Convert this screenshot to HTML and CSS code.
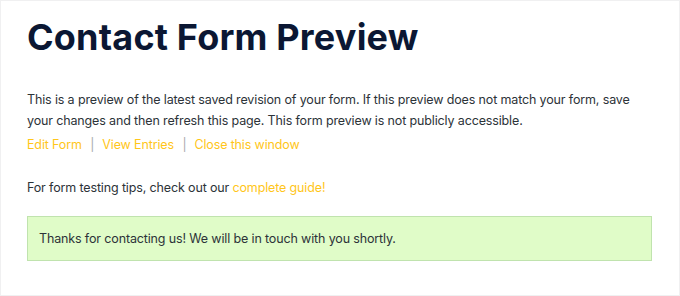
FILE: index.html
```html
<!DOCTYPE html>
<html>
<head>
<meta charset="utf-8">
<link rel="stylesheet" href="styles.css">
</head>
<body>
<div class="page">
  <h1 class="title">Contact Form Preview</h1>
  <p class="intro">This is a preview of the latest saved revision of your form. If this preview does not match your form, save your changes and then refresh this page. This form preview is not publicly accessible.</p>
  <p class="links"><a href="#">Edit Form</a><span class="sep">|</span><a href="#">View Entries</a><span class="sep">|</span><a href="#">Close this window</a></p>
  <p class="tips">For form testing tips, check out our <a href="#">complete guide!</a></p>
  <div class="notice">Thanks for contacting us! We will be in touch with you shortly.</div>
</div>
</body>
</html>
```
FILE: styles.css
```css
html, body {
  margin: 0;
  padding: 0;
  background: #fff;
}
.page {
  box-sizing: border-box;
  width: 680px;
  height: 296px;
  border: 1px solid #f0f0f1;
  padding: 14px 27px 0 26px;
  font-family: Inter, "Noto Sans", sans-serif;
  color: #2c3338;
}
.title {
  margin: 0;
  font-size: 36px;
  font-weight: 700;
  color: #0b1733;
  letter-spacing: 0.2px;
  line-height: 44px;
}
.intro,
.links,
.tips {
  font-size: 12.5px;
  letter-spacing: -0.14px;
  line-height: 21px;
}
.intro {
  margin: 30px 0 0;
}
.links {
  margin: 3px 0 0;
}
a {
  color: #ffc61a;
  text-decoration: none;
}
.sep {
  color: #a7aaad;
  margin: 0 8px 0 8.5px;
}
.tips {
  margin: 22px 0 0;
}
.notice {
  margin-top: 18px;
  background: #e0fcc8;
  border: 1px solid #c0e3ae;
  padding: 12px 11px;
  font-size: 12.5px;
  letter-spacing: -0.14px;
  line-height: 19px;
}
```
